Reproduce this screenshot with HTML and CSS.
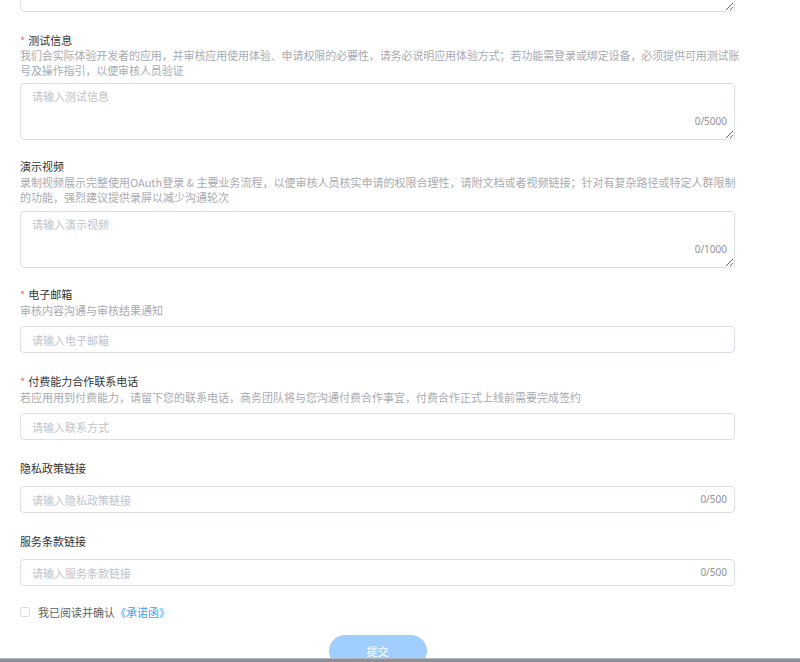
FILE: index.html
```html
<!DOCTYPE html>
<html lang="zh-CN">
<head>
<meta charset="utf-8">
<title>表单</title>
<link rel="stylesheet" href="styles.css">
</head>
<body>
<form class="form">
  <textarea class="area tail" aria-label="上一项"></textarea>

  <div class="item first">
    <div class="label"><span class="req">*</span>测试信息</div>
    <div class="desc tight">我们会实际体验开发者的应用，并审核应用使用体验、申请权限的必要性，请务必说明应用体验方式；若功能需登录或绑定设备，必须提供可用测试账<br>号及操作指引，以便审核人员验证</div>
    <div class="field area-field snug">
      <textarea class="area" placeholder="请输入测试信息"></textarea>
      <span class="count count-area">0/5000</span>
    </div>
  </div>

  <div class="item after-area">
    <div class="label">演示视频</div>
    <div class="desc">录制视频展示完整使用OAuth登录 &amp; 主要业务流程，以便审核人员核实申请的权限合理性，请附文档或者视频链接；针对有复杂路径或特定人群限制的功能，强烈建议提供录屏以减少沟通轮次</div>
    <div class="field area-field">
      <textarea class="area" placeholder="请输入演示视频"></textarea>
      <span class="count count-area">0/1000</span>
    </div>
  </div>

  <div class="item after-area">
    <div class="label"><span class="req">*</span>电子邮箱</div>
    <div class="desc">审核内容沟通与审核结果通知</div>
    <div class="field input-field">
      <input class="input" type="text" placeholder="请输入电子邮箱">
    </div>
  </div>

  <div class="item">
    <div class="label"><span class="req">*</span>付费能力合作联系电话</div>
    <div class="desc">若应用用到付费能力，请留下您的联系电话，商务团队将与您沟通付费合作事宜，付费合作正式上线前需要完成签约</div>
    <div class="field input-field">
      <input class="input" type="text" placeholder="请输入联系方式">
    </div>
  </div>

  <div class="item">
    <div class="label">隐私政策链接</div>
    <div class="field input-field no-desc">
      <input class="input with-count" type="text" placeholder="请输入隐私政策链接">
      <span class="count count-input">0/500</span>
    </div>
  </div>

  <div class="item">
    <div class="label">服务条款链接</div>
    <div class="field input-field no-desc">
      <input class="input with-count" type="text" placeholder="请输入服务条款链接">
      <span class="count count-input">0/500</span>
    </div>
  </div>

  <label class="agree">
    <span class="checkbox"></span>
    <span class="agree-text">我已阅读并确认<a class="link" href="#">《承诺函》</a></span>
  </label>

  <div class="actions">
    <button class="submit" type="button">提交</button>
  </div>
</form>
<div class="bottom-bar"></div>
</body>
</html>
```

FILE: styles.css
```css
html, body {
  margin: 0;
  padding: 0;
  overflow: hidden;
  background: #ffffff;
}

body {
  font-family: "Noto Sans CJK SC", "Noto Sans", sans-serif;
  font-size: 11px;
  color: #303133;
}

.form {
  width: 715px;
  margin-left: 20px;
  display: flex;
  flex-direction: column;
}

.area {
  display: block;
  box-sizing: border-box;
  width: 100%;
  height: 57px;
  margin: 0;
  padding: 4px 11px;
  border: 1px solid #dcdfe6;
  border-radius: 4px;
  font-family: "Noto Sans CJK SC", "Noto Sans", sans-serif;
  font-size: 11px;
  line-height: 16px;
  color: #606266;
  background: #fff;
  resize: vertical;
  outline: none;
}

.area::placeholder,
.input::placeholder {
  color: #c0c4cc;
}

.tail {
  margin-top: -45px;
}

.item {
  margin-top: 20px;
  display: flex;
  flex-direction: column;
}

.item.first {
  margin-top: 20px;
}

.item.after-area {
  margin-top: 18px;
}

.label {
  line-height: 16px;
  color: #333333;
}

.req {
  color: #f56c6c;
  margin-right: 3px;
}

.desc {
  margin-top: 1px;
  margin-right: -4px;
  line-height: 15px;
  color: #a8abb2;
}

.desc.tight {
  margin-top: 0;
  margin-right: -30px;
  letter-spacing: -0.1px;
}

.field {
  position: relative;
}

.area-field {
  margin-top: 6px;
}

.area-field.snug {
  margin-top: 5px;
}

.input-field {
  margin-top: 8px;
}

.input-field.no-desc {
  margin-top: 10px;
}

.input {
  display: block;
  box-sizing: border-box;
  width: 100%;
  height: 27px;
  margin: 0;
  padding: 0 11px;
  border: 1px solid #dcdfe6;
  border-radius: 4px;
  font-family: "Noto Sans CJK SC", "Noto Sans", sans-serif;
  font-size: 11px;
  color: #606266;
  background: #fff;
  outline: none;
}

.input.with-count {
  padding-right: 48px;
}

.count {
  position: absolute;
  right: 8px;
  font-family: "Noto Sans", sans-serif;
  font-size: 10px;
  line-height: 14px;
  color: #909399;
}

.count-area {
  bottom: 12px;
}

.count-input {
  top: 6px;
}

.agree {
  margin-top: 18px;
  display: flex;
  align-items: center;
  height: 16px;
  cursor: pointer;
}

.checkbox {
  box-sizing: border-box;
  width: 10px;
  height: 10px;
  border: 1px solid #dcdfe6;
  border-radius: 2px;
  background: #fff;
  margin-right: 8px;
}

.agree-text {
  color: #606266;
  line-height: 16px;
}

.link {
  color: #409eff;
  text-decoration: none;
}

.actions {
  margin-top: 15px;
  display: flex;
  justify-content: center;
}

.submit {
  width: 98px;
  height: 32px;
  border: none;
  border-radius: 16px;
  background: #a0cfff;
  color: #ffffff;
  font-family: "Noto Sans CJK SC", "Noto Sans", sans-serif;
  font-size: 11px;
  cursor: not-allowed;
}

.bottom-bar {
  position: fixed;
  left: 0;
  right: 0;
  bottom: 0;
  height: 3px;
  background: #8a9099;
  border-top: 1px solid #b4b9c0;
}
```
